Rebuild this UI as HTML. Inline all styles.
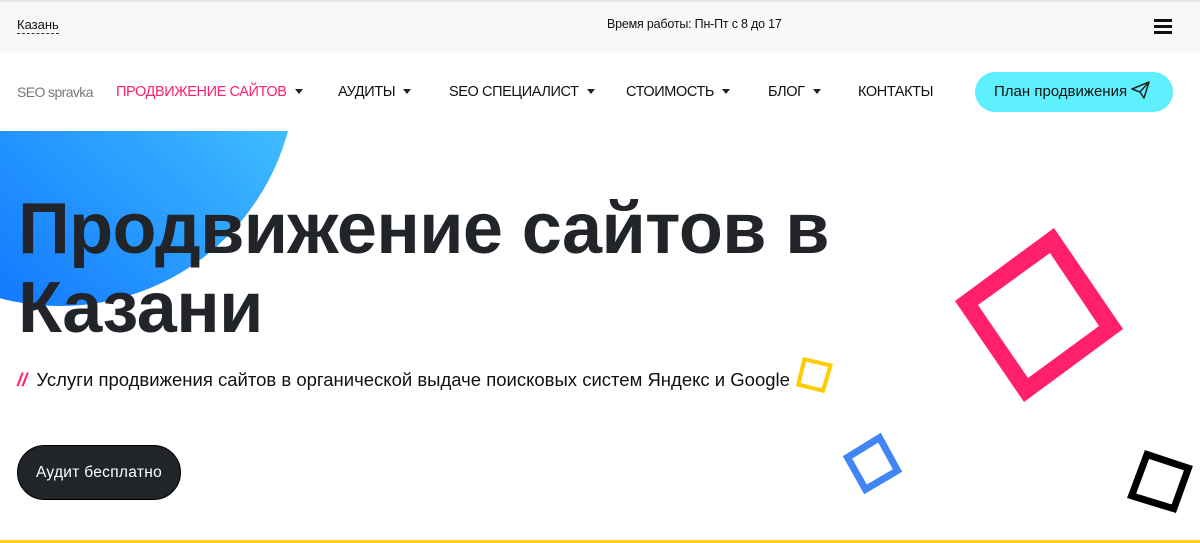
<!DOCTYPE html>
<html><head><meta charset="utf-8"><style>
*{margin:0;padding:0;box-sizing:border-box}
body{width:1200px;height:543px;overflow:hidden;background:#fff;font-family:"Liberation Sans","Noto Sans CJK SC",sans-serif;color:#111;position:relative}
.top{position:absolute;left:0;top:0;width:1200px;height:52px;background:#f7f8fa;border-top:2px solid #e6e7ea}
.abs{position:absolute;white-space:nowrap}
.nav{font-size:14.5px;top:84px;color:#111;letter-spacing:-.4px}
.car{display:inline-block;border-left:4px solid transparent;border-right:4px solid transparent;border-top:5px solid #222;vertical-align:middle;margin-left:8px;margin-top:-2px}
h1{position:absolute;left:18px;top:190px;font-size:72px;line-height:79px;font-weight:bold;color:#212428;letter-spacing:-0.6px;white-space:nowrap}
</style></head><body>
<div class="top"></div>
<div class="abs" style="left:17px;top:16px;font-size:13px;border-bottom:1px dashed #333;line-height:17px">Казань</div>
<div class="abs" style="left:607px;top:17px;font-size:12.5px;letter-spacing:-.2px">Время работы: Пн-Пт с 8 до 17</div>
<div class="abs" style="left:1154px;top:19px;width:18px;height:3px;background:#111;box-shadow:0 6px 0 #111,0 12px 0 #111"></div>

<div class="abs nav" style="left:17px;color:#777;font-size:14px;letter-spacing:-.6px">SEO spravka</div>
<div class="abs nav" style="left:116px;color:#ff1f6b">ПРОДВИЖЕНИЕ САЙТОВ<span class="car"></span></div>
<div class="abs nav" style="left:338px">АУДИТЫ<span class="car"></span></div>
<div class="abs nav" style="left:449px">SEO СПЕЦИАЛИСТ<span class="car"></span></div>
<div class="abs nav" style="left:626px">СТОИМОСТЬ<span class="car"></span></div>
<div class="abs nav" style="left:768px">БЛОГ<span class="car"></span></div>
<div class="abs nav" style="left:858px">КОНТАКТЫ</div>
<div class="abs" style="left:975px;top:72px;width:198px;height:40px;border-radius:20px;background:#5ff0fd;font-size:15px;line-height:40px;padding-left:19px;color:#111">План продвижения
<svg width="20" height="18" viewBox="0 0 20 18" style="vertical-align:-3px"><path d="M1 8 L18 1 L13 17 L9 11 Z M9 11 L18 1" fill="none" stroke="#222" stroke-width="1.5" stroke-linejoin="round"/></svg></div>

<svg class="abs" style="left:0;top:0" width="1200" height="543">
<defs><linearGradient id="g" x1="0" y1="1" x2="1" y2="0"><stop offset="0" stop-color="#0060ff"/><stop offset="1" stop-color="#5ee8ff"/></linearGradient>
<clipPath id="c"><rect x="0" y="131" width="400" height="300"/></clipPath></defs>
<circle cx="60" cy="70" r="236" fill="url(#g)" clip-path="url(#c)"/>
<path fill="#ff1f6b" fill-rule="evenodd" d="M955 301 L1054 228 L1123 329 L1024 402 Z M978 305 L1050 253 L1099 326 L1028 378 Z"/>
<polygon points="804.4,359.3 830.5,365.4 823.1,390.7 798.3,384.6" fill="none" stroke="#ffcc00" stroke-width="4"/>
<polygon points="847.5,457.4 879.5,437.7 897.5,470.5 865.5,489.4" fill="none" stroke="#4285f4" stroke-width="7"/>
<polygon points="1147,454.5 1188.4,468.2 1173.8,508.7 1131.6,495.8" fill="none" stroke="#000" stroke-width="7"/>
<rect x="0" y="540" width="1200" height="3" fill="#ffd21f"/>
</svg>

<h1>Продвижение сайтов в<br>Казани</h1>
<div class="abs" style="left:17px;top:369px;font-size:18.5px;color:#111"><span style="color:#ff1f6b;font-weight:bold;font-style:italic;margin-right:4px">//</span> Услуги продвижения сайтов в органической выдаче поисковых систем Яндекс и Google</div>
<div class="abs" style="left:17px;top:445px;width:164px;height:55px;border-radius:28px;background:#212428;border:1px solid #000;color:#fff;font-size:15.5px;line-height:53px;text-align:center;letter-spacing:.3px">Аудит бесплатно</div>
</body></html>
